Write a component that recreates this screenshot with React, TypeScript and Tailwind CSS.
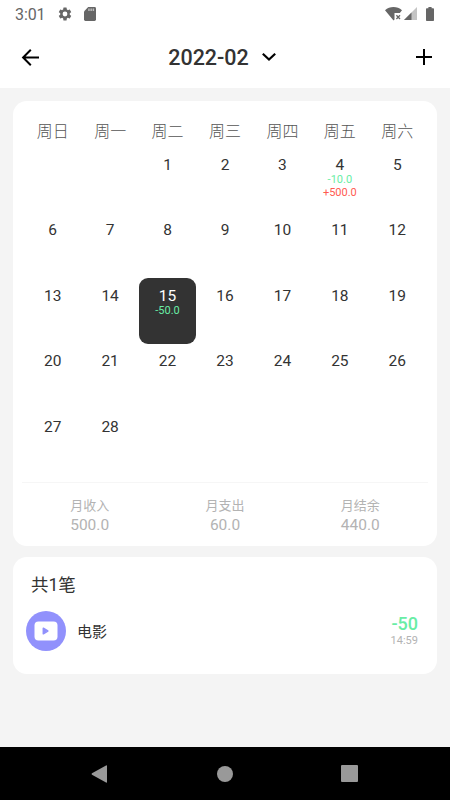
import React from 'react';
import { clsx } from 'clsx';

const WEEKDAYS = ['周日', '周一', '周二', '周三', '周四', '周五', '周六'];

// February 2022 starts on a Tuesday
const FIRST_WEEKDAY = 2;
const DAYS_IN_MONTH = 28;
const SELECTED_DAY = 15;

const RECORDS: Record<number, { expense?: string; income?: string }> = {
  4: { expense: '-10.0', income: '+500.0' },
  15: { expense: '-50.0' },
};

const SUMMARY = [
  { label: '月收入', value: '500.0' },
  { label: '月支出', value: '60.0' },
  { label: '月结余', value: '440.0' },
];

const StatusBar = () => (
  <div className="flex h-[27px] items-center justify-between pl-[15px] pr-[16px] text-[#666]">
    <div className="flex items-center">
      <span className="w-[42px] pt-px text-[16px] leading-[27px] tracking-[-0.1px]">3:01</span>
      <svg className="h-4 w-4" viewBox="0 0 24 24" fill="currentColor">
        <path d="M19.14 12.94c.04-.3.06-.61.06-.94 0-.32-.02-.64-.07-.94l2.03-1.58a.49.49 0 0 0 .12-.61l-1.92-3.32a.49.49 0 0 0-.59-.22l-2.39.96a7.03 7.03 0 0 0-1.62-.94l-.36-2.54a.48.48 0 0 0-.48-.41h-3.84a.48.48 0 0 0-.47.41l-.36 2.54c-.59.24-1.13.57-1.62.94l-2.39-.96a.48.48 0 0 0-.59.22L2.74 8.87a.48.48 0 0 0 .12.61l2.03 1.58c-.05.3-.09.63-.09.94s.02.64.07.94l-2.03 1.58a.49.49 0 0 0-.12.61l1.92 3.32c.12.22.37.29.59.22l2.39-.96c.5.38 1.03.7 1.62.94l.36 2.54c.05.24.24.41.48.41h3.84c.24 0 .44-.17.47-.41l.36-2.54c.59-.24 1.13-.56 1.62-.94l2.39.96c.22.08.47 0 .59-.22l1.92-3.32a.48.48 0 0 0-.12-.61l-2.01-1.58zM12 15.6a3.6 3.6 0 1 1 0-7.2 3.6 3.6 0 0 1 0 7.2z" />
      </svg>
      <svg className="ml-[11px] h-[14px] w-[12px]" viewBox="0 0 12 14" fill="currentColor">
        <path d="M4.2 0H10.6Q12 0 12 1.4V12.6Q12 14 10.6 14H1.4Q0 14 0 12.6V4.4Z" />
        <path d="M4.2 1.5h1.5v2.5H4.2zM6.4 1.5h1.5v2.5H6.4zM8.6 1.5h1.5v2.5H8.6z" fill="#bbb" />
      </svg>
    </div>
    <div className="flex items-center">
      <svg className="h-[14px] w-[18px]" viewBox="0 0 18 14" fill="currentColor">
        <path d="M0 3.3C4.7-1.1 12.3-1.1 17 3.3L14.8 6H9.5V12.5L8.5 13.5Z" />
        <path d="M11.4 8.2L15 12M15 8.2L11.4 12" stroke="currentColor" strokeWidth="1.3" />
      </svg>
      <svg className="ml-[1px] h-[13px] w-[13px]" viewBox="0 0 13 13" fill="currentColor">
        <path d="M13 0V13H0Z" fill="#c4c4c4" />
        <path d="M7.5 5.5V13H0Z" />
      </svg>
      <svg className="ml-[9px] h-[14px] w-[8px]" viewBox="0 0 8 14" fill="currentColor">
        <path d="M2.4 0h3.2v1.3H7.2q.8 0 .8.8V13.2q0 .8-.8.8H.8q-.8 0-.8-.8V2.1q0-.8.8-.8H2.4z" />
      </svg>
    </div>
  </div>
);

const Header = () => (
  <div className="flex h-[61px] items-center justify-between pr-[18px] pb-px pl-[21px]">
    <svg className="h-[17px] w-[18px]" viewBox="0 0 18 17" fill="none" stroke="#000" strokeWidth="2">
      <path d="M9.8 .8L2.1 8.5L9.8 16.2M1.8 8.5H18" />
    </svg>
    <div className="mr-[11px] flex flex-1 items-center justify-center">
      <span className="pt-[2px] text-[21.5px] leading-7 font-medium text-[#333]">2022-02</span>
      <svg className="ml-[13px] h-[8px] w-[14px]" viewBox="0 0 14 8" fill="none" stroke="#000" strokeWidth="2.2">
        <path d="M.8 .8L7 6.5L13.2 .8" />
      </svg>
    </div>
    <svg className="h-4 w-4" viewBox="0 0 16 16" fill="none" stroke="#000" strokeWidth="2">
      <path d="M8 0V16M0 8H16" />
    </svg>
  </div>
);

const DayCell = ({ day }: { day: number }) => {
  const selected = day === SELECTED_DAY;
  const record = RECORDS[day];

  return (
    <div
      className={clsx(
        'flex h-[65.6px] flex-col items-center rounded-[9px] pt-[8.6px]',
        selected ? 'bg-[#333] text-white' : 'text-[#333]'
      )}
    >
      <span className="-mb-px text-[15.5px] leading-[19px]">{day}</span>
      {record?.expense && <span className="text-[11px] leading-[11px] text-[#69eda5]">{record.expense}</span>}
      {record?.income && <span className="mt-[2px] text-[11px] leading-[11px] text-[#ff5a50]">{record.income}</span>}
    </div>
  );
};

const Calendar = () => (
  <div className="h-[445px] rounded-[14px] bg-white px-[11px] pt-[17px]">
    <div className="grid h-[29px] grid-cols-7 text-center text-[16px] leading-[28px] font-light text-[#555]">
      {WEEKDAYS.map((name) => (
        <span key={name}>{name}</span>
      ))}
    </div>
    <div className="grid h-[335px] grid-cols-7 content-start">
      {Array.from({ length: FIRST_WEEKDAY }, (_, i) => (
        <div key={`blank-${i}`} />
      ))}
      {Array.from({ length: DAYS_IN_MONTH }, (_, i) => (
        <DayCell key={i + 1} day={i + 1} />
      ))}
    </div>
    <div className="-mx-[2px] grid grid-cols-3 border-t border-[#f6f6f6] pt-[13px] text-center text-[#b3b3b3]">
      {SUMMARY.map(({ label, value }) => (
        <div key={label} className="flex flex-col">
          <span className="text-[13px] leading-[19px]">{label}</span>
          <span className="pt-px text-[15.5px] leading-[19px]">{value}</span>
        </div>
      ))}
    </div>
  </div>
);

const MovieIcon = () => (
  <div className="flex h-10 w-10 items-center justify-center rounded-full bg-[#9191fc]">
    <svg className="h-5 w-6" viewBox="0 0 24 20">
      <rect x="0.5" y="0.5" width="23" height="19" rx="4" fill="#fff" />
      <path d="M9.3 7.2L13.8 10L9.3 12.8Z" fill="#9191fc" stroke="#9191fc" strokeWidth="1.5" strokeLinejoin="round" />
    </svg>
  </div>
);

const RecordList = () => (
  <div className="mt-[11px] h-[117px] rounded-[14px] bg-white pt-[15px] pr-[19px] pl-[13px]">
    <p className="pl-[5px] text-[17.5px] leading-[26px] text-[#333]">共1笔</p>
    <div className="mt-[13px] flex h-10 items-center">
      <MovieIcon />
      <span className="ml-[11px] pt-[2px] text-[15px] text-[#333]">电影</span>
      <div className="ml-auto flex flex-col items-end">
        <span className="text-[18px] leading-[19px] font-medium text-[#69eda5]">-50</span>
        <span className="pt-px text-[11px] leading-[14px] text-[#b3b3b3]">14:59</span>
      </div>
    </div>
  </div>
);

const NavBar = () => (
  <div className="flex h-[53px] items-center justify-between bg-black pr-[92px] pl-[91px]">
    <svg className="h-[18px] w-[17px]" viewBox="0 0 17 18" fill="#999">
      <path d="M15 .5Q16 0 16 1V17Q16 18 15 17.5L1 9.7Q0 9 1 8.3Z" />
    </svg>
    <div className="h-4 w-4 rounded-full bg-[#999]" />
    <div className="h-[17px] w-[17px] rounded-[1px] bg-[#999]" />
  </div>
);

export default function App() {
  return (
    <div className="flex h-[800px] w-[450px] flex-col overflow-hidden bg-[#f4f4f4] font-[Roboto,'Noto_Sans_CJK_SC',sans-serif]">
      <div className="bg-white">
        <StatusBar />
        <Header />
      </div>
      <main className="flex-1 px-[13px] pt-[13px]">
        <Calendar />
        <RecordList />
      </main>
      <NavBar />
    </div>
  );
}
